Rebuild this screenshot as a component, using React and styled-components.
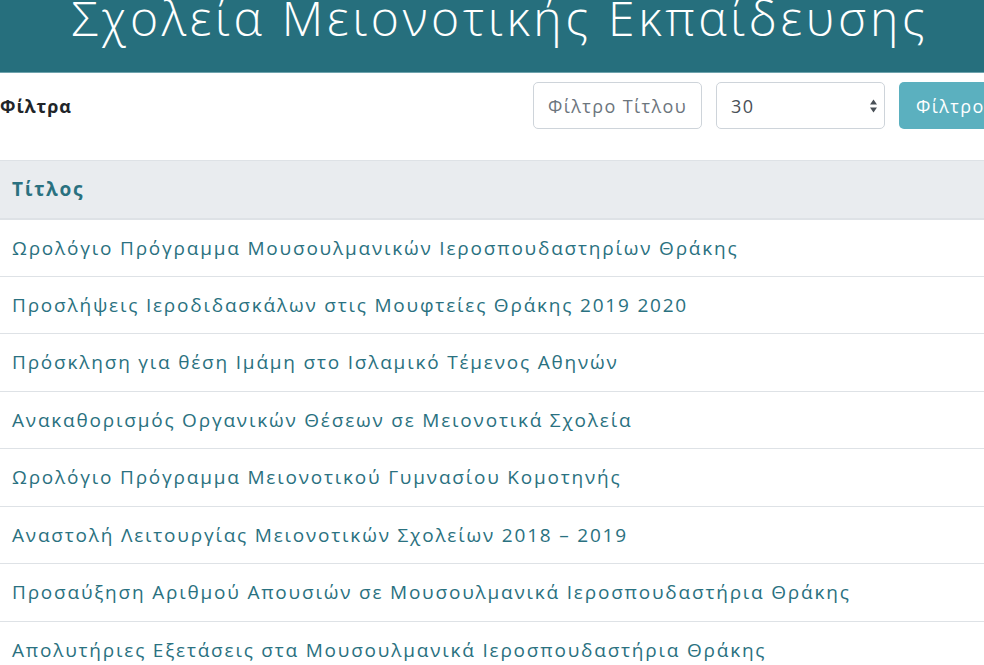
import React from 'react'
import styled, { createGlobalStyle } from 'styled-components'

const GlobalStyle = createGlobalStyle`
  html, body {
    margin: 0;
    padding: 0;
    background: #fff;
    overflow: hidden;
  }
  body {
    font-family: "Open Sans", "Noto Sans", sans-serif;
    width: 984px;
  }
`

const Header = styled.header`
  height: 72px;
  background: #266f7d;
  overflow: hidden;
  display: flex;
  justify-content: center;
  padding-left: 16px;
  border-bottom: 1px solid #6fa3ad;
`

const Title = styled.h1`
  margin: -26px 0 0;
  font-size: 48px;
  font-weight: 300;
  letter-spacing: 3.7px;
  line-height: 88px;
  color: #fff;
  white-space: nowrap;
`

const FilterBar = styled.div`
  display: flex;
  align-items: center;
  box-sizing: border-box;
  height: 87px;
  padding: 0 0 22px;
  width: 1010px;
`

const FilterLabel = styled.div`
  font-size: 18px;
  font-weight: 700;
  letter-spacing: 0.9px;
  color: #212529;
  margin-right: auto;
`

const Field = styled.div`
  box-sizing: border-box;
  width: 169px;
  height: 47px;
  margin-right: 14px;
  border: 1px solid #ced4da;
  border-radius: 5px;
  display: flex;
  align-items: center;
  padding: 0 6px 0 14px;
  font-size: 18px;
  letter-spacing: 1.4px;
  color: ${p => (p.$placeholder ? '#6c757d' : '#495057')};
  white-space: nowrap;
  overflow: hidden;
`

const Arrows = styled.svg`
  margin-left: auto;
`

const Button = styled.button`
  box-sizing: border-box;
  height: 47px;
  width: 111px;
  border: none;
  border-radius: 5px;
  background: #5bb0bf;
  color: #fff;
  font-family: inherit;
  font-size: 18px;
  letter-spacing: 1.4px;
  text-align: left;
  padding: 0 0 0 17px;
  flex-shrink: 0;
`

const Table = styled.table`
  width: 100%;
  border-collapse: collapse;
`

const HeadCell = styled.th`
  height: 58px;
  box-sizing: border-box;
  background: #e9ecef;
  border-top: 1px solid #dee2e6;
  border-bottom: 2px solid #dee2e6;
  padding: 0 12px;
  text-align: left;
  font-size: 19px;
  font-weight: 700;
  letter-spacing: 1.7px;
  color: #2a7180;
`

const Cell = styled.td`
  height: 57.5px;
  box-sizing: border-box;
  border-top: 1px solid #dee2e6;
  padding: 0 12px;
  font-size: 19px;
  letter-spacing: 1.8px;
  color: #2a7180;
  white-space: nowrap;
`

const titles = [
  'Ωρολόγιο Πρόγραμμα Μουσουλμανικών Ιεροσπουδαστηρίων Θράκης',
  'Προσλήψεις Ιεροδιδασκάλων στις Μουφτείες Θράκης 2019 2020',
  'Πρόσκληση για θέση Ιμάμη στο Ισλαμικό Τέμενος Αθηνών',
  'Ανακαθορισμός Οργανικών Θέσεων σε Μειονοτικά Σχολεία',
  'Ωρολόγιο Πρόγραμμα Μειονοτικού Γυμνασίου Κομοτηνής',
  'Αναστολή Λειτουργίας Μειονοτικών Σχολείων 2018 – 2019',
  'Προσαύξηση Αριθμού Απουσιών σε Μουσουλμανικά Ιεροσπουδαστήρια Θράκης',
  'Απολυτήριες Εξετάσεις στα Μουσουλμανικά Ιεροσπουδαστήρια Θράκης',
]

export default function App() {
  return (
    <>
      <GlobalStyle />
      <Header>
        <Title>Σχολεία Μειονοτικής Εκπαίδευσης</Title>
      </Header>
      <FilterBar>
        <FilterLabel>Φίλτρα</FilterLabel>
        <Field $placeholder>Φίλτρο Τίτλου</Field>
        <Field>
          30
          <Arrows width="9" height="16" viewBox="0 0 9 16">
            <path d="M4.5 1.5 L8 6.5 H1 Z" fill="#495057" />
            <path d="M4.5 14.5 L8 9.5 H1 Z" fill="#495057" />
          </Arrows>
        </Field>
        <Button>Φίλτρο</Button>
      </FilterBar>
      <Table>
        <thead>
          <tr>
            <HeadCell>Τίτλος</HeadCell>
          </tr>
        </thead>
        <tbody>
          {titles.map(t => (
            <tr key={t}>
              <Cell>{t}</Cell>
            </tr>
          ))}
        </tbody>
      </Table>
    </>
  )
}
